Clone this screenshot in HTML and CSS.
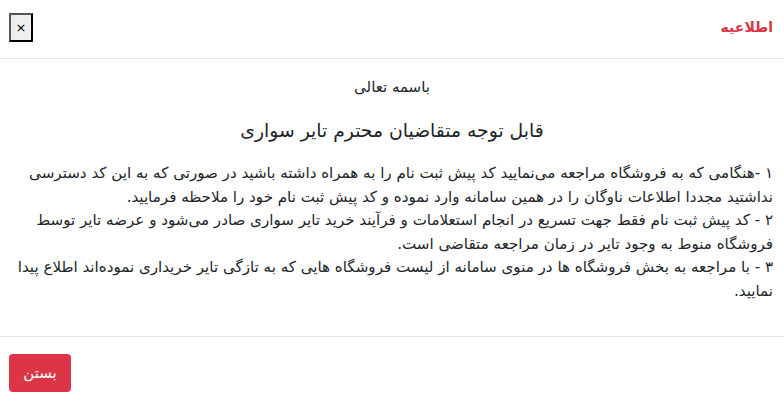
FILE: index.html
```html
<!DOCTYPE html>
<html lang="fa" dir="rtl">
<head>
<meta charset="utf-8">
<link rel="stylesheet" href="styles.css">
</head>
<body>
<div class="modal">
  <div class="modal-header">
    <h5 class="modal-title">اطلاعیه</h5>
    <button class="close-btn" type="button">×</button>
  </div>
  <div class="modal-body">
    <p class="center small">باسمه تعالی</p>
    <h4 class="center heading">قابل توجه متقاضیان محترم تایر سواری</h4>
    <p class="text">۱ -هنگامی که به فروشگاه مراجعه می‌نمایید کد پیش ثبت نام را به همراه داشته باشید در صورتی که به این کد دسترسی نداشتید مجددا اطلاعات ناوگان را در همین سامانه وارد نموده و کد پیش ثبت نام خود را ملاحظه فرمایید.<br>۲ - کد پیش ثبت نام فقط جهت تسریع در انجام استعلامات و فرآیند خرید تایر سواری صادر می‌شود و عرضه تایر توسط فروشگاه منوط به وجود تایر در زمان مراجعه متقاضی است.<br>۳ - با مراجعه به بخش فروشگاه ها در منوی سامانه از لیست فروشگاه هایی که به تازگی تایر خریداری نموده‌اند اطلاع پیدا نمایید.</p>
  </div>
  <div class="modal-footer">
    <button class="btn-danger" type="button">بستن</button>
  </div>
</div>
</body>
</html>
```

FILE: styles.css
```css
html, body {
  margin: 0;
  padding: 0;
  background: #fff;
}
body {
  font-family: "DejaVu Sans", sans-serif;
  color: #212529;
  font-size: 14px;
}
.modal {
  width: 784px;
}
.modal-header {
  display: flex;
  justify-content: space-between;
  align-items: flex-start;
  height: 59px;
  box-sizing: border-box;
  padding: 13px 11px 0 9px;
  border-bottom: 1px solid #dee2e6;
}
.modal-title {
  margin: 0;
  padding-top: 2px;
  font-size: 14px;
  font-weight: bold;
  color: #dc3545;
  line-height: 24px;
}
.close-btn {
  width: 24px;
  height: 29px;
  padding: 0;
  font-family: "DejaVu Sans", sans-serif;
  font-size: 13px;
  background: #efefef;
  border: 2px outset #000;
  color: #000;
}
.modal-body {
  height: 277px;
  box-sizing: border-box;
  padding: 17px 11px 0 4px;
}
.center {
  text-align: center;
}
.small {
  margin: 0 0 0 7px;
  font-size: 15px;
  line-height: 22px;
}
.heading {
  margin: 20px 0 0 7px;
  font-size: 18.8px;
  font-weight: normal;
  line-height: 26px;
}
.text {
  margin: 18px 0 0;
  font-size: 15.1px;
  line-height: 23.5px;
  text-align: right;
}
.modal-footer {
  border-top: 1px solid #dee2e6;
  height: 69px;
  box-sizing: border-box;
  padding: 17px 9px 0;
  display: flex;
  justify-content: flex-end;
}
.btn-danger {
  width: 62px;
  height: 38px;
  background: #dc3545;
  color: #fff;
  border: none;
  border-radius: 4px;
  font-family: "DejaVu Sans", sans-serif;
  font-size: 15px;
  font-weight: normal;
}
```
